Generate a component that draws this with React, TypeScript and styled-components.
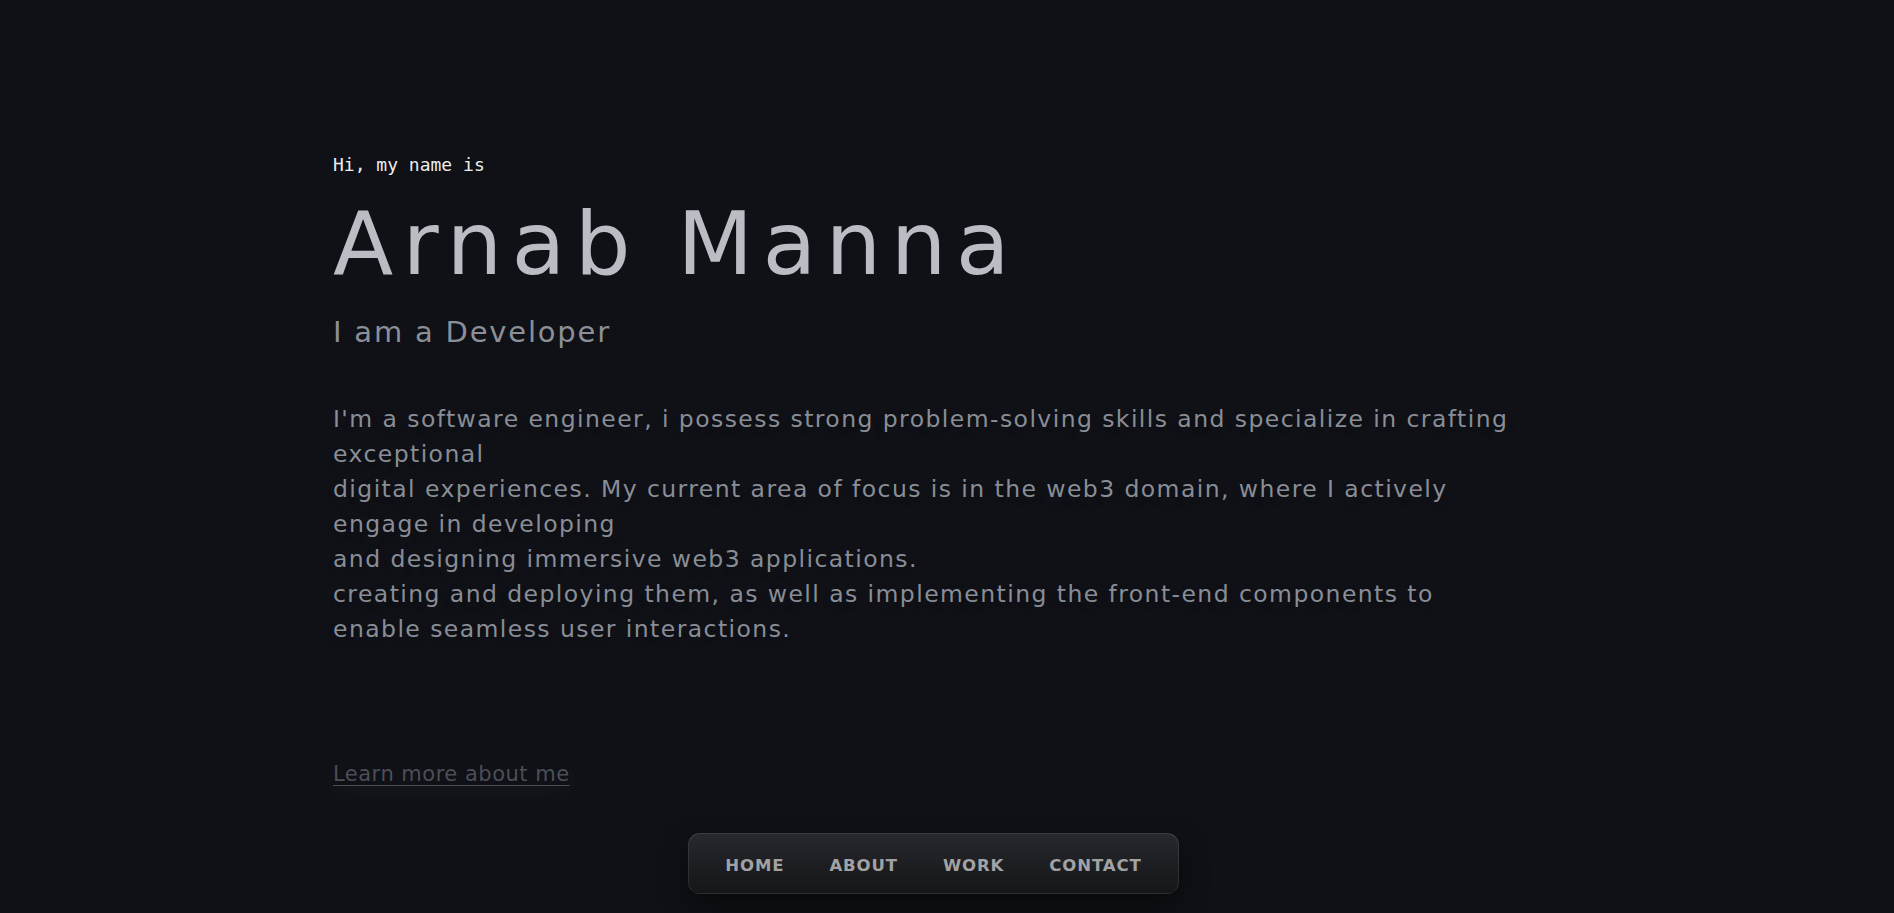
import React from 'react';
import styled, { createGlobalStyle } from 'styled-components';

const GlobalStyle = createGlobalStyle`
  html, body {
    margin: 0;
    padding: 0;
    background-color: #0f1116;
  }
  * {
    box-sizing: border-box;
  }
`;

const Page = styled.div`
  min-height: 100vh;
  background-color: #0f1116;
  display: flex;
  flex-direction: column;
`;

const Hero = styled.main`
  width: 100%;
  max-width: 1228px;
  margin: 0 auto;
  padding-top: 154px;
  display: flex;
  flex-direction: column;
  align-items: flex-start;
  flex: 1;
`;

const Greeting = styled.p`
  margin: 0;
  font-family: 'DejaVu Sans Mono', 'Liberation Mono', monospace;
  font-size: 18px;
  line-height: 22px;
  color: #ececec;
`;

const Name = styled.h1`
  margin: 24px 0 0;
  font-family: 'DejaVu Sans', 'Liberation Sans', sans-serif;
  font-weight: 400;
  font-size: 88px;
  line-height: 88px;
  letter-spacing: 9.3px;
  color: #babdc3;
`;

const Role = styled.h2`
  margin: 27px 0 0;
  font-family: 'DejaVu Sans', 'Liberation Sans', sans-serif;
  font-weight: 400;
  font-size: 29px;
  line-height: 35px;
  letter-spacing: 1.8px;
  color: #8b8f98;
`;

const About = styled.p`
  margin: 52px 0 0;
  font-family: 'DejaVu Sans', 'Liberation Sans', sans-serif;
  font-size: 23.5px;
  line-height: 35px;
  letter-spacing: 1.43px;
  color: #898d96;
  white-space: nowrap;
  text-shadow: 0 6px 22px rgba(140, 150, 170, 0.08);
`;

const MoreLink = styled.a`
  margin-top: 114px;
  font-family: 'DejaVu Sans', 'Liberation Sans', sans-serif;
  font-size: 21px;
  line-height: 26px;
  letter-spacing: 0.5px;
  color: #4b4e57;
  text-decoration: underline;
  text-underline-offset: 4px;
  text-decoration-thickness: 1px;
  box-shadow: 0 6px 24px rgba(120, 130, 150, 0.06);
  cursor: pointer;
`;

const Footer = styled.footer`
  display: flex;
  justify-content: center;
  padding: 0 27px 19px 0;
`;

const NavBar = styled.nav`
  height: 61px;
  display: flex;
  align-items: center;
  gap: 45px;
  padding: 3px 36px 0;
  border-radius: 12px;
  border: 1px solid rgba(255, 255, 255, 0.09);
  border-top-color: rgba(255, 255, 255, 0.16);
  border-bottom-color: rgba(255, 255, 255, 0.03);
  background: linear-gradient(180deg, #28292e 0%, #1c1d21 60%, #16171b 100%);
  box-shadow: 0 10px 30px rgba(0, 0, 0, 0.45);
`;

const NavItem = styled.a`
  font-family: 'DejaVu Sans', 'Liberation Sans', sans-serif;
  font-weight: 700;
  font-size: 16.5px;
  letter-spacing: 0.9px;
  color: #a2a2a4;
  text-decoration: none;
  cursor: pointer;
`;

const navItems = ['HOME', 'ABOUT', 'WORK', 'CONTACT'];

const App = (): React.ReactElement => (
  <Page>
    <GlobalStyle />
    <Hero>
      <Greeting>Hi, my name is</Greeting>
      <Name>Arnab Manna</Name>
      <Role>I am a Developer</Role>
      <About>
        I'm a software engineer, i possess strong problem-solving skills and specialize in crafting
        <br />
        exceptional
        <br />
        digital experiences. My current area of focus is in the web3 domain, where I actively
        <br />
        engage in developing
        <br />
        and designing immersive web3 applications.
        <br />
        creating and deploying them, as well as implementing the front-end components to
        <br />
        enable seamless user interactions.
      </About>
      <MoreLink>Learn more about me</MoreLink>
    </Hero>
    <Footer>
      <NavBar>
        {navItems.map((item) => (
          <NavItem key={item}>{item}</NavItem>
        ))}
      </NavBar>
    </Footer>
  </Page>
);

export default App;
